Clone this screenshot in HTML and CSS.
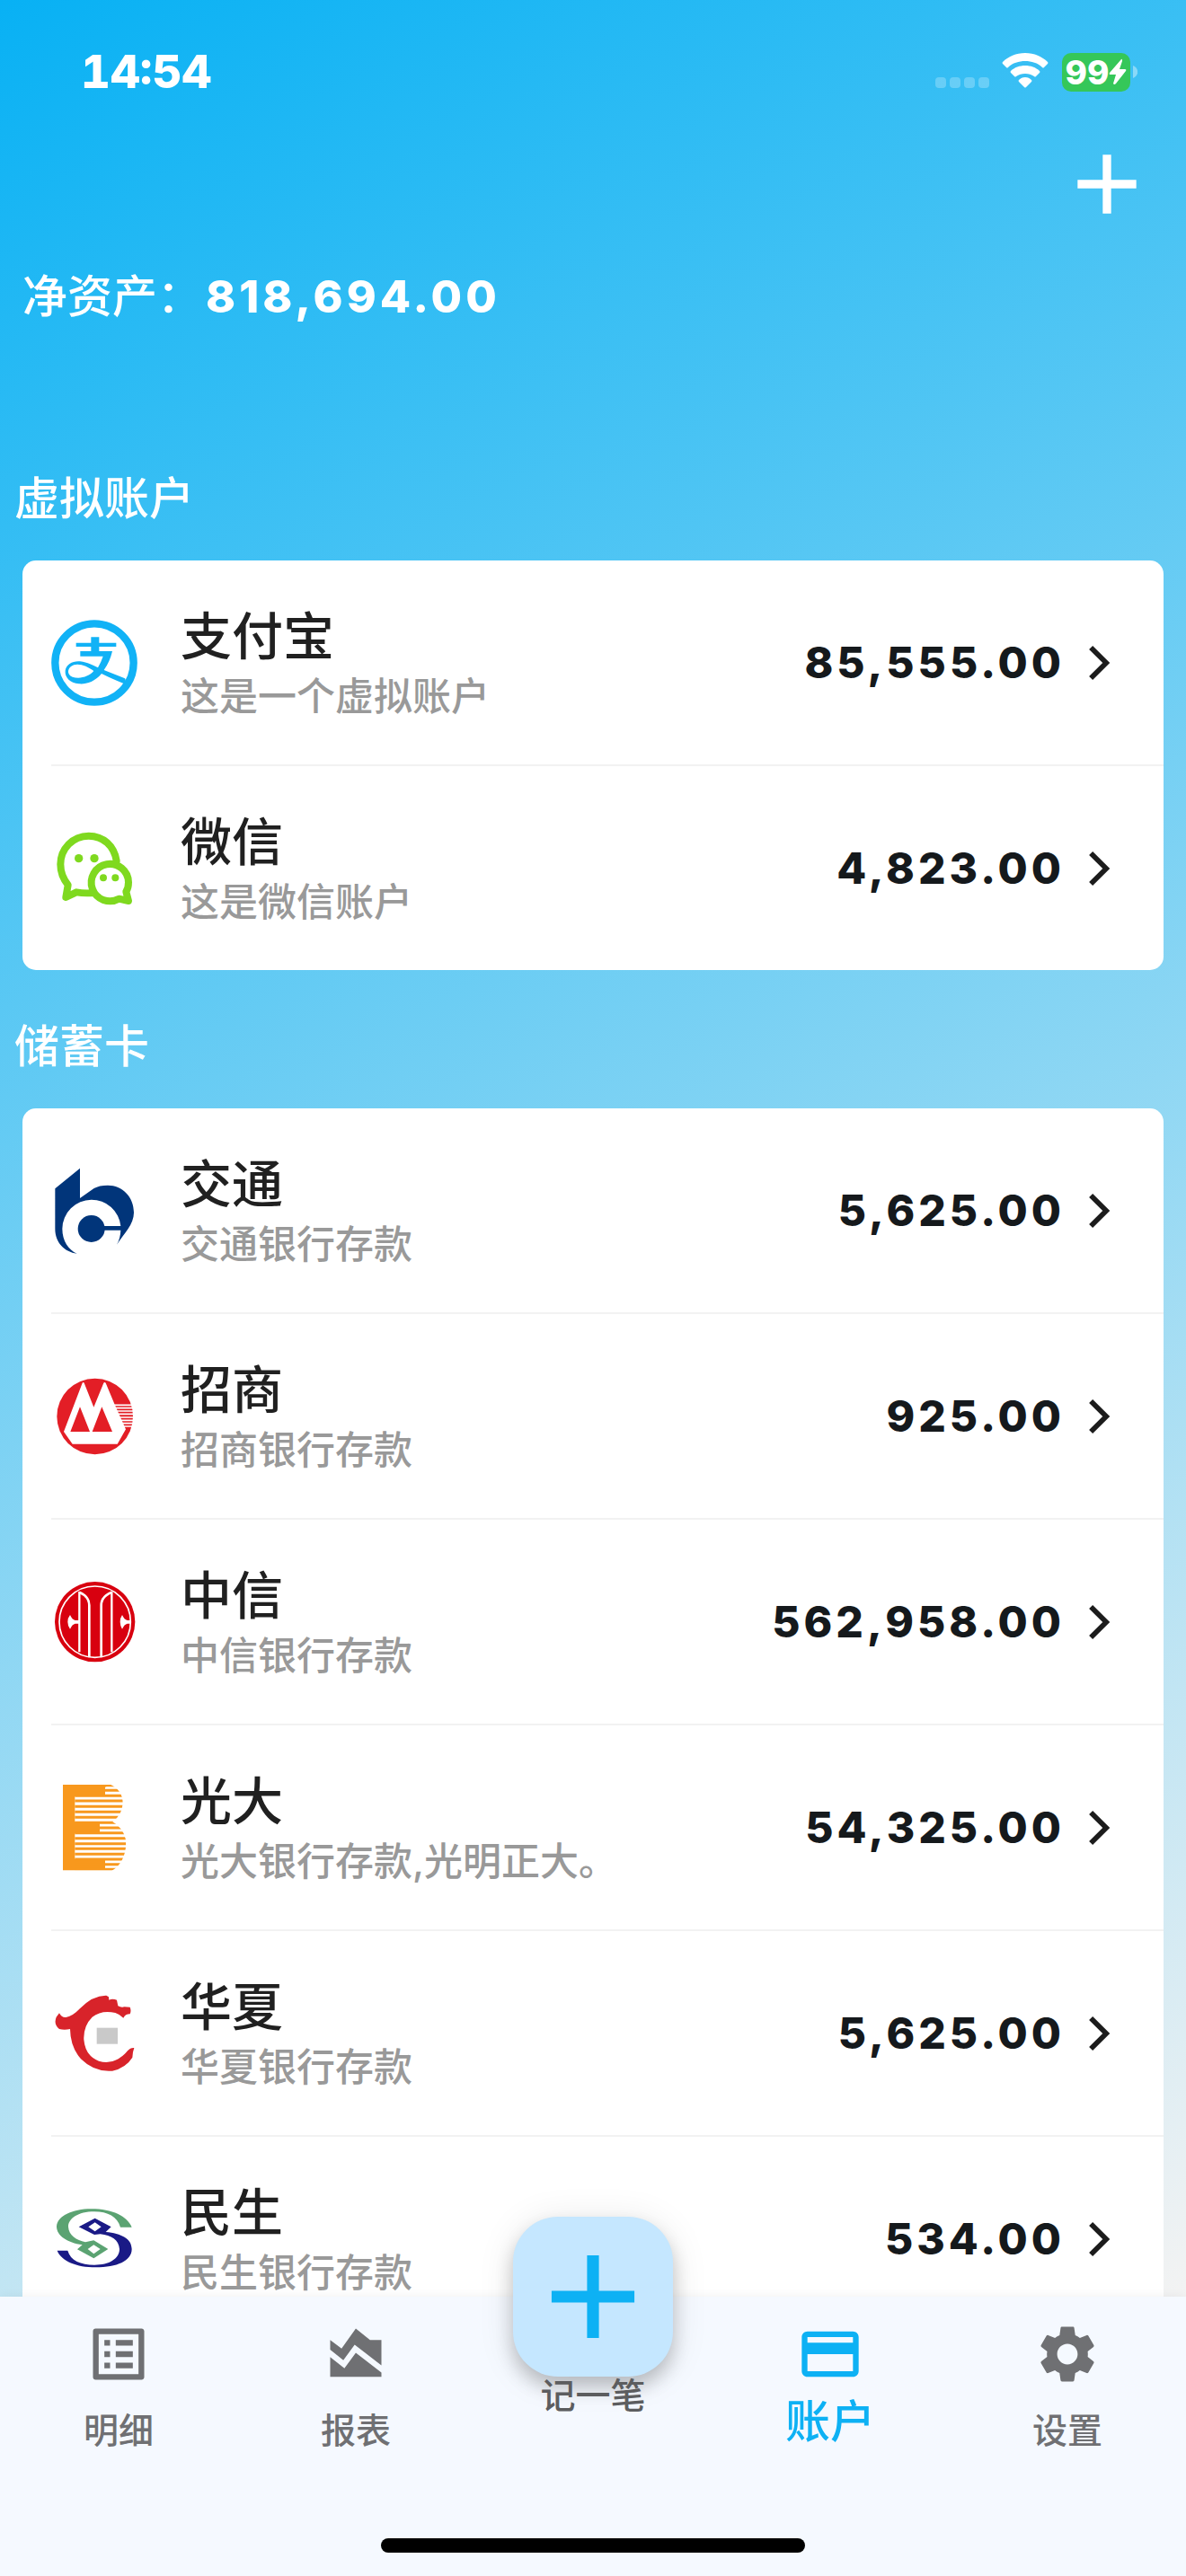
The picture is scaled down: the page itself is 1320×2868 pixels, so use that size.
FILE: index.html
```html
<!DOCTYPE html>
<html lang="zh-CN">
<head>
<meta charset="utf-8">
<meta name="viewport" content="width=device-width, initial-scale=1">
<title>账户</title>
<link rel="stylesheet" href="styles.css">
</head>
<body>
<svg class="sprite" aria-hidden="true">
  <symbol id="chevron" viewBox="0 0 24 24"><path fill="none" stroke="currentColor" stroke-width="1.8" d="M9.2 6.6 14.6 12l-5.4 5.4"/></symbol>
  <symbol id="plus" viewBox="0 0 24 24"><path d="M19 13h-6v6h-2v-6H5v-2h6V5h2v6h6v2z"/></symbol>
</svg>
<div class="app">
  <main class="screen">
    <div class="status">
      <span class="time">14:54</span>
      <div class="status-icons">
        <svg class="signal" viewBox="0 0 60 44" aria-hidden="true"><g fill="#fff" fill-opacity=".25"><rect y="28" width="12" height="12" rx="4"/><rect x="16" y="28" width="12" height="12" rx="4"/><rect x="32" y="28" width="12" height="12" rx="4"/><rect x="48" y="28" width="12" height="12" rx="4"/></g></svg>
        <svg class="wifi" viewBox="0 0 52 44" aria-hidden="true"><path fill="#fff" d="M26 1C16 1 7 5 1 11Q0 12 1 13L5 17Q6 18 7 17C12 12 19 10 26 10S40 12 45 17Q46 18 47 17L51 13Q52 12 51 11C45 5 36 1 26 1ZM26 15C20 15 14 17 10 21Q9 22 10 23L14 27Q15 28 16 27C19 25 22 24 26 24S33 25 36 27Q37 28 38 27L42 23Q43 22 42 21C38 17 32 15 26 15ZM26 28C23 28 21 29 19 31Q18 32 19 33L25 39Q26 40 27 39L33 33Q34 32 33 31C31 29 29 28 26 28Z"/></svg>
        <div class="battery"><span>99</span><svg viewBox="0 0 20 30" aria-hidden="true"><path fill="#fff" d="M14 1 1 16Q0 18 2 18H8L5 28Q6 30 8 28L19 14Q20 12 18 12H12L15 3Q15 0 14 1Z"/></svg></div>
        <svg class="nub" viewBox="0 0 5 14" aria-hidden="true"><path fill="#fff" fill-opacity=".4" d="M0 0C7 3 7 11 0 14Z"/></svg>
      </div>
    </div>

    <header class="toolbar">
      <button class="add" type="button" aria-label="添加账户"><svg aria-hidden="true"><use href="#plus"/></svg></button>
    </header>

    <p class="net">净资产：<strong class="net-value">818,694.00</strong></p>

    <section class="group">
      <h2>虚拟账户</h2>
      <ul class="card">
        <li><a class="row" href="#alipay">
          <svg class="logo" viewBox="0 0 288 288" aria-hidden="true"><circle cx="144" cy="144" r="131" fill="none" stroke="#11b2f6" stroke-width="25"/><g fill="#11b2f6"><path d="M83 77H133V58H160V77H217V90H160V105H204Q196 140 176 168L246 196Q252 206 244 214Q200 196 168 180C145 208 115 216 93 214C62 211 45 192 47 170C50 148 72 137 96 139C122 142 140 153 156 160Q166 143 173 122H97V105H133V90H83ZM142 171C122 156 95 145 76 151C53 158 50 184 71 191C96 199 126 190 142 171Z" fill-rule="evenodd"/></g></svg>
          <span class="info"><span class="name">支付宝</span><span class="note">这是一个虚拟账户</span></span>
          <span class="amount">85,555.00</span><svg class="go" aria-hidden="true"><use href="#chevron"/></svg>
        </a></li>
        <li><a class="row" href="#wechat">
          <svg class="logo" viewBox="0 0 288 288" aria-hidden="true"><g fill="none" stroke="#7fd91f" stroke-width="24" stroke-linecap="round" stroke-linejoin="round"><path d="M218 118C210 68 174 35 125 35C72 35 31 78 31 130C31 160 40 179 56 199L49 240L84 223Q110 228 146 225"/><path fill="#fff" d="M250 221C258 210 258 202 258 190A62 62 0 1 0 226 245L258 252Z"/></g><g fill="#7fd91f"><circle cx="92" cy="110" r="14"/><circle cx="144" cy="110" r="14"/><circle cx="174" cy="175" r="12"/><circle cx="214" cy="175" r="12"/></g></svg>
          <span class="info"><span class="name">微信</span><span class="note">这是微信账户</span></span>
          <span class="amount">4,823.00</span><svg class="go" aria-hidden="true"><use href="#chevron"/></svg>
        </a></li>
      </ul>
    </section>

    <section class="group">
      <h2>储蓄卡</h2>
      <ul class="card">
        <li><a class="row" href="#bocom">
          <svg class="logo" viewBox="0 0 288 288" aria-hidden="true"><g fill="#01357a"><path d="M96 2V102L143 69Q160 59 189 59C238 59 276 98 276 150C276 190 243 220 219 257Q231 236 232 209H176V195H232A98 98 0 0 0 134 107A98 98 0 0 0 37 204C37 245 58 275 86 287C45 283 13 250 13 205V70Z"/><circle cx="134" cy="204" r="45"/></g></svg>
          <span class="info"><span class="name">交通</span><span class="note">交通银行存款</span></span>
          <span class="amount">5,625.00</span><svg class="go" aria-hidden="true"><use href="#chevron"/></svg>
        </a></li>
        <li><a class="row" href="#cmb">
          <svg class="logo" viewBox="0 0 288 288" aria-hidden="true"><circle cx="146" cy="144" r="127" fill="#e31e26"/><path fill="#fff" d="M42 195 104 32Q107 28 110 32L142 113 175 32Q178 28 182 32L212 104 249 187 221 236H71Z"/><path fill="#e31e26" d="M96 112 64 195H129ZM169 112 137 195H204Z"/><path stroke="#fff" stroke-width="5" d="M210 106H276M214 116H276M219 126H276M224 136H276M228 147H276M232 157H276M237 167H276M242 177H276"/></svg>
          <span class="info"><span class="name">招商</span><span class="note">招商银行存款</span></span>
          <span class="amount">925.00</span><svg class="go" aria-hidden="true"><use href="#chevron"/></svg>
        </a></li>
        <li><a class="row" href="#citic">
          <svg class="logo" viewBox="0 0 288 288" aria-hidden="true"><circle cx="146" cy="143" r="134" fill="#d8000f"/><g fill="none" stroke="#fff"><circle cx="146" cy="143" r="119" stroke-width="5"/><path stroke-width="7" d="M94 42V244M202 42V244"/><path stroke-width="8" d="M94 44Q127 58 127 88V262M202 44Q167 58 167 88V262"/></g><path fill="#fff" d="M94 138H80Q70 136 63 120Q55 130 55 143Q55 156 63 167Q70 151 80 149H94ZM264 138H254Q244 136 237 120Q230 130 230 143Q230 156 237 167Q244 151 254 149H264Z"/></svg>
          <span class="info"><span class="name">中信</span><span class="note">中信银行存款</span></span>
          <span class="amount">562,958.00</span><svg class="go" aria-hidden="true"><use href="#chevron"/></svg>
        </a></li>
        <li><a class="row" href="#ceb">
          <svg class="logo" viewBox="0 0 288 288" aria-hidden="true"><defs><clipPath id="ceb-shape"><path d="M39 0H199Q239 20 239 62Q237 100 205 124Q249 150 250 198Q246 260 205 286H39Z"/></clipPath></defs><path fill="#f8981d" d="M39 0H199L180 8V39H79V124H162V163H79V248H180V279L205 286H39Z"/><path clip-path="url(#ceb-shape)" stroke="#f8981d" stroke-width="9" d="M79 2H288M79 19H288M79 37H288M79 54H288M79 73H288M79 91H288M79 109H288M79 127H288M79 144H288M79 161H288M79 179H288M79 197H288M79 214H288M79 232H288M79 249H288M79 266H288M79 283H288"/></svg>
          <span class="info"><span class="name">光大</span><span class="note">光大银行存款,光明正大。</span></span>
          <span class="amount">54,325.00</span><svg class="go" aria-hidden="true"><use href="#chevron"/></svg>
        </a></li>
        <li><a class="row" href="#hxb">
          <svg class="logo" viewBox="21 16 288 288" aria-hidden="true"><path fill="#d8232a" d="M48 92Q55 107 70 106Q95 100 115 78Q160 32 205 33L213 38 214 48Q225 43 240 48L244 68Q255 74 265 71L284 72Q289 85 284 95Q268 95 262 108Q250 96 235 91Q190 80 158 105Q128 135 130 180Q135 235 180 252Q215 262 245 245Q265 232 276 218Q285 207 298 208L294 222 292 240Q270 275 225 285Q165 290 120 245Q85 205 84 145Q65 150 48 145Q28 130 38 105Z"/><path fill="#c9c9c9" d="M173 141H243V195H173Z"/></svg>
          <span class="info"><span class="name">华夏</span><span class="note">华夏银行存款</span></span>
          <span class="amount">5,625.00</span><svg class="go" aria-hidden="true"><use href="#chevron"/></svg>
        </a></li>
        <li><a class="row" href="#cmbc">
          <svg class="logo" viewBox="21 703 288 288" aria-hidden="true"><path fill="#5ba372" fill-rule="evenodd" d="M290 807H252C242 772 210 755 165 755C110 755 78 778 78 806C80 835 105 850 135 857L163 851 211 880 163 911 108 881 125 866C75 858 39 836 39 804C42 770 90 746 155 746C225 746 275 770 290 807ZM163 866 143 880 163 896 185 880Z"/><path fill="#1a1a86" fill-rule="evenodd" d="M41 885H76C85 918 120 933 165 933C215 933 249 912 249 880C247 850 222 834 185 830L165 832 113 806 167 777 221 806 203 823C255 828 290 845 290 880C290 920 240 941 170 941C105 941 55 920 41 885ZM167 791 145 806 167 821 188 806Z"/></svg>
          <span class="info"><span class="name">民生</span><span class="note">民生银行存款</span></span>
          <span class="amount">534.00</span><svg class="go" aria-hidden="true"><use href="#chevron"/></svg>
        </a></li>
      </ul>
    </section>
  </main>

  <nav class="tabbar">
    <div class="tabs">
      <a class="tab" href="#details"><svg viewBox="0 0 24 24" aria-hidden="true"><path d="M19 5v14H5V5h14m1.1-2H3.9c-.5 0-.9.4-.9.9v16.2c0 .4.4.9.9.9h16.2c.4 0 .9-.5.9-.9V3.9c0-.5-.5-.9-.9-.9zM11 7h6v2h-6V7zm0 4h6v2h-6v-2zm0 4h6v2h-6zM7 7h2v2H7zm0 4h2v2H7zm0 4h2v2H7z"/></svg><span>明细</span></a>
      <a class="tab" href="#reports"><svg viewBox="0 0 24 24" aria-hidden="true"><path d="M3 13v7h18v-1.5l-9-7L8 17l-5-4zm0-6 4 3 5-7 5 4h4v8.97l-9.4-7.31-3.98 5.48L3 10.44V7z"/></svg><span>报表</span></a>
      <button class="tab tab-new" type="button"><span class="fab"><svg aria-hidden="true"><use href="#plus"/></svg></span><span>记一笔</span></button>
      <a class="tab tab-active" href="#accounts" aria-current="page"><svg viewBox="0 0 24 24" aria-hidden="true"><path d="M20 4H4c-1.11 0-1.99.89-1.99 2L2 18c0 1.11.89 2 2 2h16c1.11 0 2-.89 2-2V6c0-1.11-.89-2-2-2zm0 14H4v-6h16v6zm0-10H4V6h16v2z"/></svg><span>账户</span></a>
      <a class="tab" href="#settings"><svg viewBox="0 0 24 24" aria-hidden="true"><path d="M19.14 12.94c.04-.3.06-.61.06-.94 0-.32-.02-.64-.07-.94l2.03-1.58c.18-.14.23-.41.12-.61l-1.92-3.32c-.12-.22-.37-.29-.59-.22l-2.39.96c-.5-.38-1.03-.7-1.62-.94L14.4 2.81c-.04-.24-.24-.41-.48-.41h-3.84c-.24 0-.43.17-.47.41L9.25 5.35C8.66 5.59 8.12 5.92 7.63 6.29L5.24 5.33c-.22-.08-.47 0-.59.22L2.74 8.87c-.12.21-.08.47.12.61l2.03 1.58c-.05.3-.09.63-.09.94s.02.64.07.94l-2.03 1.58c-.18.14-.23.41-.12.61l1.92 3.32c.12.22.37.29.59.22l2.39-.96c.5.38 1.03.7 1.62.94l.36 2.54c.05.24.24.41.48.41h3.84c.24 0 .44-.17.47-.41l.36-2.54c.59-.24 1.13-.56 1.62-.94l2.39.96c.22.08.47 0 .59-.22l1.92-3.32c.12-.22.07-.47-.12-.61l-2.01-1.58zM12 15.6c-1.98 0-3.6-1.62-3.6-3.6s1.62-3.6 3.6-3.6 3.6 1.62 3.6 3.6-1.62 3.6-3.6 3.6z"/></svg><span>设置</span></a>
    </div>
    <div class="home-indicator"></div>
  </nav>
</div>
</body>
</html>
```
FILE: styles.css
```css
* { box-sizing: border-box; }

body {
  margin: 0;
  font-family: Inter, "Noto Sans CJK SC", sans-serif;
  font-weight: 500;
  color: #202020;
}

h2, p, ul { margin: 0; padding: 0; }
ul { list-style: none; }
a { color: inherit; text-decoration: none; }
button { border: 0; padding: 0; background: none; font: inherit; color: inherit; }
svg { display: block; fill: currentColor; }
.sprite { display: none; }

.app {
  display: flex;
  flex-direction: column;
  height: 100vh;
}

.screen {
  flex: 1;
  min-height: 0;
  overflow-y: auto;
  scrollbar-width: none;
  background: linear-gradient(153deg, #08b1f4, #f3f3f3);
}

/* Status bar */
.status {
  display: flex;
  justify-content: space-between;
  align-items: center;
  padding: 45px 54px 0 90px;
  color: #fff;
}
.time {
  font-size: 51px;
  line-height: 70px;
  font-weight: 800;
  font-variant-numeric: tabular-nums;
}
.status-icons { display: flex; align-items: center; }
.signal { width: 60px; height: 44px; }
.wifi { width: 52px; height: 44px; margin-left: 14px; }
.battery {
  display: flex;
  align-items: center;
  justify-content: center;
  width: 76px;
  height: 43px;
  margin: 0 3px 0 15px;
  border-radius: 10px;
  background: #35c759;
  font-size: 37px;
  line-height: 43px;
  font-weight: 800;
}
.battery svg { width: 20px; height: 30px; }
.nub { width: 5px; height: 14px; }

.toolbar {
  display: flex;
  justify-content: flex-end;
  align-items: center;
  height: 180px;
  padding: 0 32px;
}
.add, .add svg { width: 112px; height: 112px; color: #fff; }

.net {
  padding: 0 25px;
  font-size: 50px;
  line-height: 70px;
  color: #fff;
  margin-bottom: 105px;
}
.net-value { margin-left: 4px; font-weight: 800; letter-spacing: 4px; }

/* Account groups */
.group { padding-top: 50px; }
.group h2 {
  padding: 0 16px;
  margin-bottom: 34px;
  font-size: 50px;
  line-height: 70px;
  font-weight: 500;
  color: #fff;
}
.card {
  margin: 0 25px;
  border-radius: 15px;
  background: #fff;
}
.card li { padding-left: 32px; }
.card li + li .row { border-top: 2px solid #f2f2f2; height: 229px; }
.row {
  display: flex;
  align-items: center;
  height: 227px;
  padding-right: 34px;
}
.logo { width: 96px; height: 96px; margin-right: 48px; }
.info { display: flex; flex-direction: column; flex: 1; }
.name { font-size: 57px; line-height: 74px; }
.note { font-size: 43px; line-height: 58px; color: #999; }
.amount {
  font-size: 48px;
  line-height: 70px;
  font-weight: 800;
  letter-spacing: 4px;
  color: #15191c;
}
.go { width: 76px; height: 76px; color: #1c1c1c; }

/* Bottom tabs */
.tabbar {
  position: relative;
  padding: 26px 0;
  background: #f5f9ff;
  box-shadow: 0 0 12px rgba(0, 0, 0, .06);
}
.tabs {
  display: grid;
  grid-template-columns: repeat(5, 1fr);
  height: 150px;
}
.tab {
  position: relative;
  display: flex;
  flex-direction: column;
  align-items: center;
  justify-content: space-between;
  font-size: 39px;
  line-height: 54px;
  color: #6f7073;
}
.tab > svg { width: 76px; height: 76px; }
.tab-active { color: #0db1f4; font-size: 50px; line-height: 74px; }
.tab-new { justify-content: flex-start; padding-top: 57px; color: #5c5d5f; }
.tab-new > span { position: relative; }
.tab-new > .fab {
  position: absolute;
  top: -115px;
  left: calc(50% - 89px);
  display: grid;
  place-items: center;
  width: 178px;
  height: 178px;
  border-radius: 50px;
  background: #c5e7ff;
  color: #0db1f4;
  box-shadow: 0 12px 20px rgba(0, 0, 0, .2), 0 4px 40px rgba(0, 0, 0, .1);
}
.fab svg { width: 158px; height: 158px; }

.home-indicator {
  width: 472px;
  height: 16px;
  margin: 93px auto 0;
  border-radius: 8px;
  background: #000;
}
```
